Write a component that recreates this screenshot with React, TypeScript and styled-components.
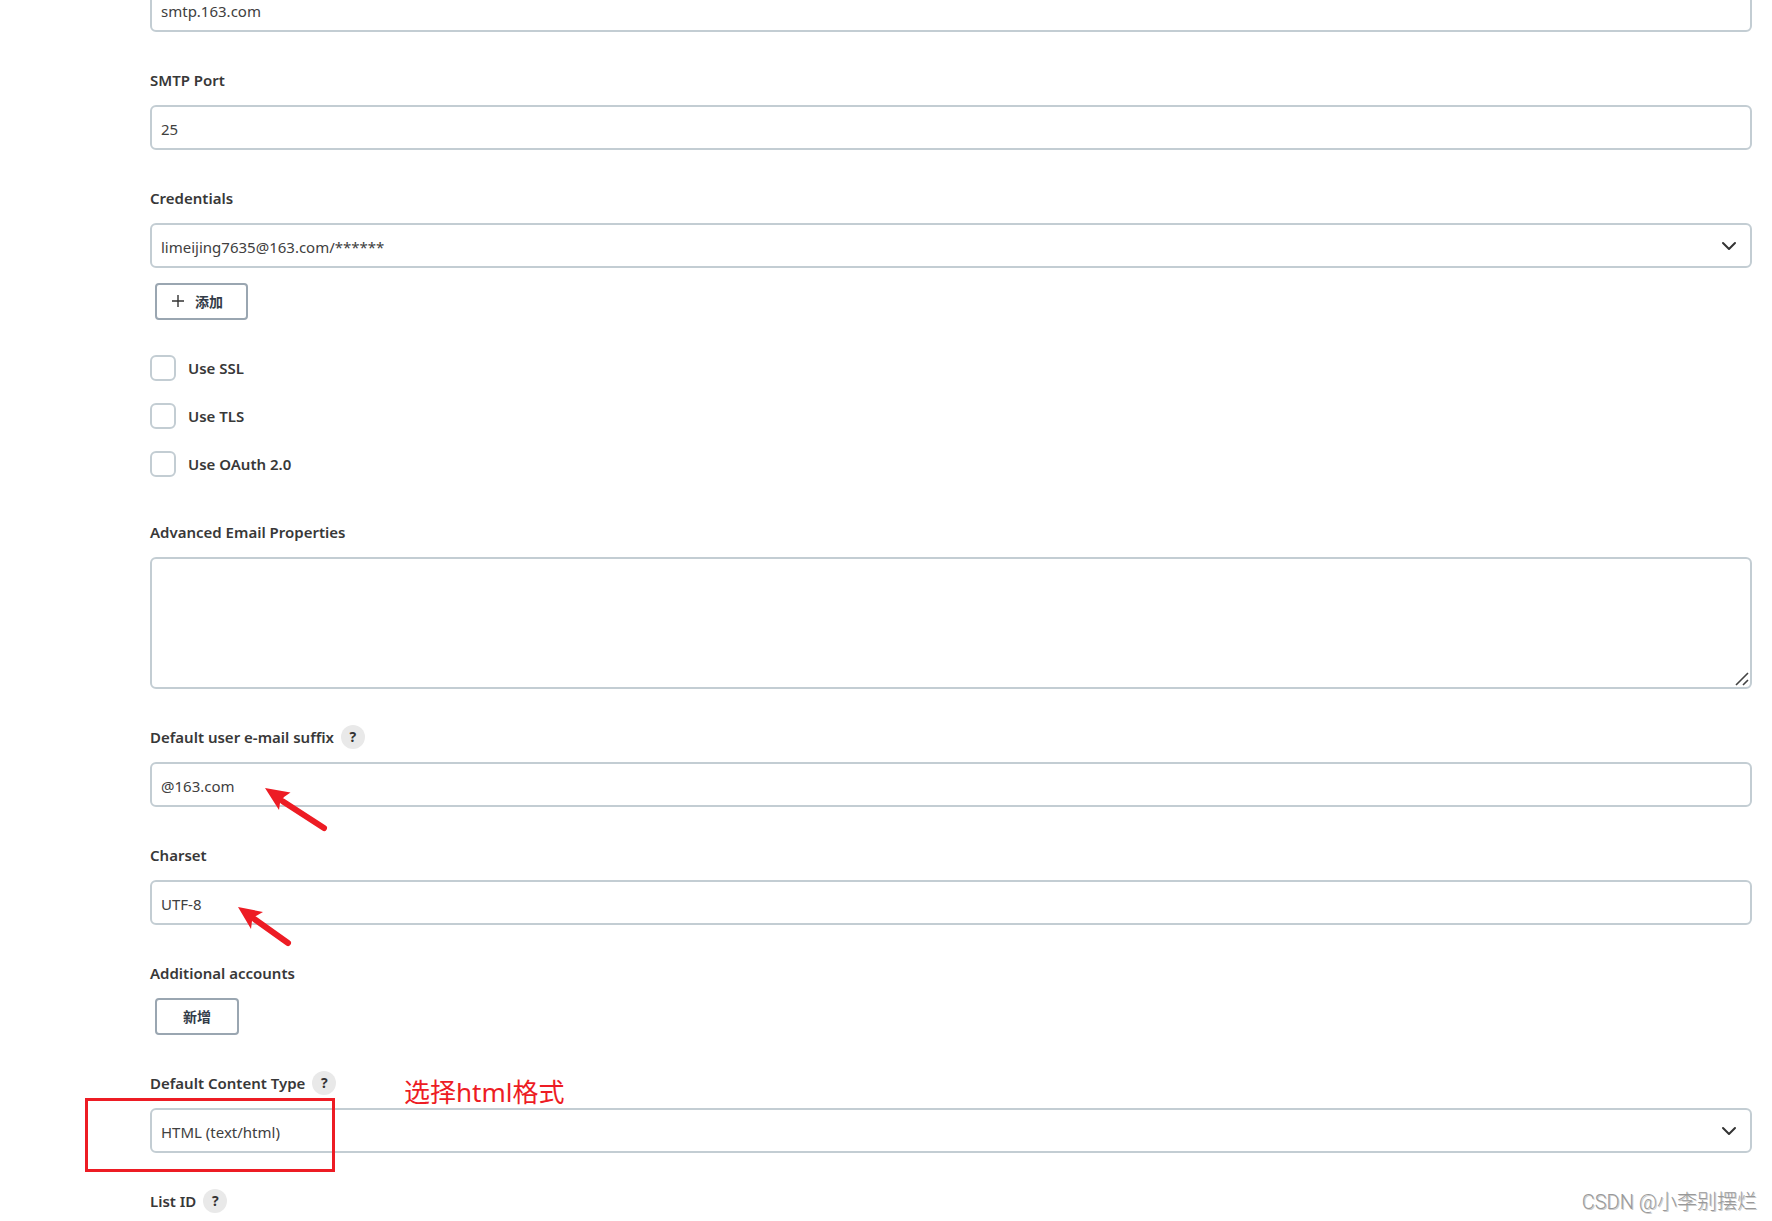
import React, { useId } from "react";
import styled, { createGlobalStyle } from "styled-components";

const GlobalStyle = createGlobalStyle`
  *, *::before, *::after { box-sizing: border-box; }
  body {
    margin: 0;
    background: #fff;
    color: #383838;
    font-family: "Noto Sans", "Noto Sans CJK SC", sans-serif;
    font-size: 15px;
  }
`;

const border = "#c3cdd3";
const red = "#ed1c24";

const Page = styled.main`
  position: relative;
  min-height: 100vh;
  overflow: hidden;
  padding: 0 20px 0 150px;
`;

const Form = styled.form`
  display: flex;
  flex-direction: column;
  gap: 36px;
  margin-top: -13px;
`;

const FieldBox = styled.div`
  display: flex;
  flex-direction: column;
  align-items: stretch;
`;

const LabelRow = styled.div`
  display: flex;
  align-items: center;
  gap: 7px;
  height: 24px;
  margin-bottom: 13px;
`;

const labelFont = `
  font-size: 15px;
  font-weight: 600;
  line-height: 24px;
`;

const Label = styled.label`
  ${labelFont}
`;

const Caption = styled.span`
  ${labelFont}
`;

const HelpButton = styled.button`
  width: 24px;
  height: 24px;
  padding: 0;
  border: 0;
  border-radius: 50%;
  background: #e9e9e9;
  color: #333;
  font: 700 14px/24px "Noto Sans", sans-serif;
  text-align: center;
`;

const ControlWrap = styled.div`
  position: relative;
  display: flex;
`;

const controlStyle = `
  flex: 1;
  min-width: 0;
  margin: 0;
  border: 2px solid ${border};
  border-radius: 6px;
  background: #fff;
  color: #404040;
  font-family: inherit;
  font-size: 15px;
  outline: 0;
`;

const Input = styled.input`
  ${controlStyle}
  height: 45px;
  padding: 2px 9px 0;
`;

const Select = styled.select`
  ${controlStyle}
  height: 45px;
  padding: 2px 40px 0 9px;
  appearance: none;
`;

const TextArea = styled.textarea`
  ${controlStyle}
  height: 132px;
  padding: 9px;
  resize: vertical;
  &::-webkit-resizer { display: none; }
`;

const Chevron = styled.svg`
  position: absolute;
  right: 15px;
  top: 18px;
  pointer-events: none;
`;

const Grip = styled.svg`
  position: absolute;
  right: 3px;
  bottom: 3px;
  pointer-events: none;
`;

const OutlineButton = styled.button<{ $top: number; $padding: string }>`
  display: flex;
  align-items: center;
  align-self: flex-start;
  gap: 11px;
  height: 37px;
  margin: ${(p) => p.$top}px 0 0 5px;
  padding: ${(p) => p.$padding};
  border: 2px solid #9aa6b1;
  border-radius: 4px;
  background: #fff;
  color: #333c48;
  font: 600 14px/20px "Noto Sans CJK SC", sans-serif;
`;

const CheckList = styled.div`
  display: flex;
  flex-direction: column;
  gap: 22px;
  margin: -1px 0 7px;
`;

const CheckRow = styled.label`
  display: flex;
  align-items: center;
  gap: 12px;
  height: 26px;
  ${labelFont}
`;

const CheckInput = styled.input`
  appearance: none;
  width: 26px;
  height: 26px;
  margin: 0;
  border: 2px solid ${border};
  border-radius: 6px;
  background: #fff;
  &:checked { background: #0b6aa2; }
`;

const Arrow = styled.svg<{ $left: number; $top: number }>`
  position: absolute;
  left: ${(p) => p.$left}px;
  top: ${(p) => p.$top}px;
  pointer-events: none;
`;

const Highlight = styled.div`
  position: absolute;
  left: -65px;
  top: -10px;
  width: 250px;
  height: 74px;
  border: 3px solid ${red};
  pointer-events: none;
`;

const Note = styled.span`
  position: absolute;
  left: 254px;
  top: -34px;
  color: ${red};
  font: 400 26px/36px "Noto Sans", "Noto Sans CJK SC", sans-serif;
  white-space: nowrap;
  pointer-events: none;
`;

const Watermark = styled.div`
  position: absolute;
  right: 15px;
  bottom: 10px;
  color: #999;
  font: 400 20px/28px Roboto, "Noto Sans CJK SC", sans-serif;
  font-weight: 300;
  text-shadow: 1px 1px 0 #ccc;
`;

function Help({ topic }: { topic: string }) {
  return (
    <HelpButton type="button" aria-label={`Help for feature: ${topic}`}>
      ?
    </HelpButton>
  );
}

function Field({
  label,
  help,
  children,
  after,
}: {
  label: string;
  help?: boolean;
  children: (id: string) => React.ReactNode;
  after?: React.ReactNode;
}) {
  const id = useId();
  return (
    <FieldBox>
      <LabelRow>
        <Label htmlFor={id}>{label}</Label>
        {help && <Help topic={label} />}
      </LabelRow>
      <ControlWrap>{children(id)}</ControlWrap>
      {after}
    </FieldBox>
  );
}

function ChevronIcon() {
  return (
    <Chevron width="16" height="10" viewBox="0 0 16 10" fill="none" aria-hidden="true">
      <path d="M2 2l6 6 6-6" stroke="#333" strokeWidth="2" strokeLinecap="round" strokeLinejoin="round" />
    </Chevron>
  );
}

function PlusIcon() {
  return (
    <svg width="12" height="12" viewBox="0 0 12 12" aria-hidden="true">
      <path d="M6 0v12M0 6h12" stroke="#333" strokeWidth="1.4" />
    </svg>
  );
}

export default function App() {
  return (
    <Page>
      <GlobalStyle />
      <Form onSubmit={(e) => e.preventDefault()}>
        <ControlWrap>
          <Input type="text" aria-label="SMTP server" defaultValue="smtp.163.com" />
        </ControlWrap>

        <Field label="SMTP Port">{(id) => <Input id={id} type="text" defaultValue="25" />}</Field>

        <Field
          label="Credentials"
          after={
            <OutlineButton type="button" $top={15} $padding="0 23px 2px 15px">
              <PlusIcon />
              添加
            </OutlineButton>
          }
        >
          {(id) => (
            <>
              <Select id={id}>
                <option>limeijing7635@163.com/******</option>
              </Select>
              <ChevronIcon />
            </>
          )}
        </Field>

        <CheckList>
          {["Use SSL", "Use TLS", "Use OAuth 2.0"].map((name) => (
            <CheckRow key={name}>
              <CheckInput type="checkbox" />
              {name}
            </CheckRow>
          ))}
        </CheckList>

        <Field label="Advanced Email Properties">
          {(id) => (
            <>
              <TextArea id={id} />
              <Grip width="14" height="14" viewBox="0 0 14 14" fill="none" aria-hidden="true">
                <path d="M1 13L13 1M8 13l5-5" stroke="#444" strokeWidth="1.6" />
              </Grip>
            </>
          )}
        </Field>

        <Field label="Default user e-mail suffix" help>
          {(id) => (
            <>
              <Input id={id} type="text" defaultValue="@163.com" />
              <Arrow $left={115} $top={26} width="64" height="44" viewBox="0 0 64 44" aria-hidden="true">
                <path d="M18 13.500L59 40" stroke={red} strokeWidth="6" strokeLinecap="round" />
                <path d="M0 0L25.500 4.500L19 9L15 15L14 22Z" fill={red} />
              </Arrow>
            </>
          )}
        </Field>

        <Field label="Charset">
          {(id) => (
            <>
              <Input id={id} type="text" defaultValue="UTF-8" />
              <Arrow $left={88} $top={27} width="56" height="42" viewBox="0 0 56 42" aria-hidden="true">
                <path d="M17 12.500L50 36" stroke={red} strokeWidth="6" strokeLinecap="round" />
                <path d="M0 0L25 5L18 9L14 14L13 22Z" fill={red} />
              </Arrow>
            </>
          )}
        </Field>

        <FieldBox>
          <Caption>Additional accounts</Caption>
          <OutlineButton type="button" $top={13} $padding="0 26px 2px">
            新增
          </OutlineButton>
        </FieldBox>

        <Field label="Default Content Type" help>
          {(id) => (
            <>
              <Select id={id}>
                <option>HTML (text/html)</option>
              </Select>
              <ChevronIcon />
              <Highlight />
              <Note>选择html格式</Note>
            </>
          )}
        </Field>

        <LabelRow>
          <Caption>List ID</Caption>
          <Help topic="List ID" />
        </LabelRow>
      </Form>
      <Watermark>CSDN @小李别摆烂</Watermark>
    </Page>
  );
}
